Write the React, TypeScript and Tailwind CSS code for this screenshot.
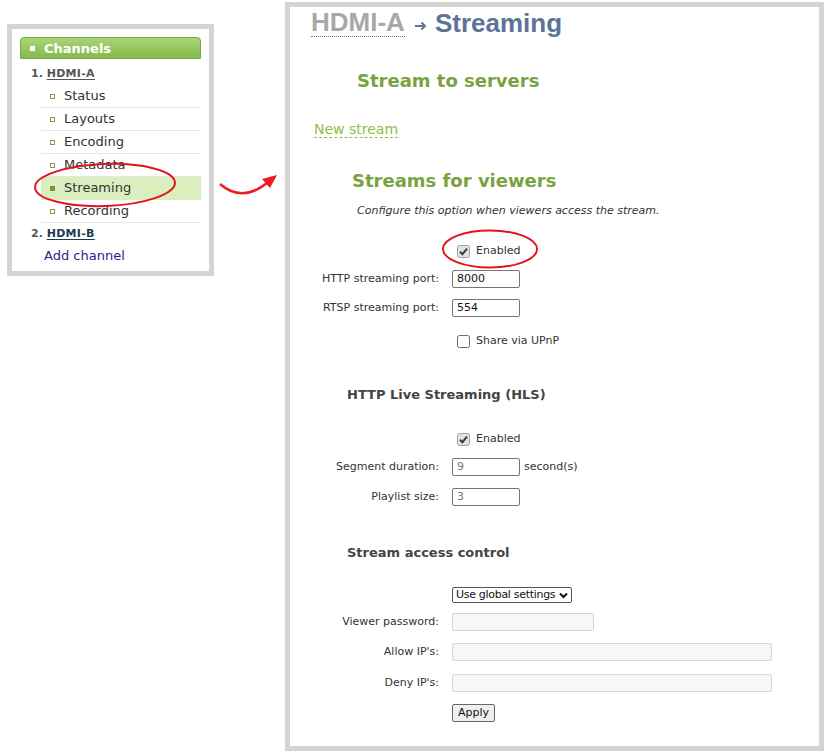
import React from "react";

function CheckOn() {
  return (
    <svg width="13" height="13" viewBox="0 0 13 13" className="block">
      <rect x="0.5" y="0.5" width="12" height="12" rx="2" fill="#e2e2e2" stroke="#a3a3a3" />
      <path d="M3 6.8 L5.4 9.2 L10 3.6" fill="none" stroke="#3a3a3a" strokeWidth="2" />
    </svg>
  );
}

function CheckOff() {
  return (
    <svg width="13" height="13" viewBox="0 0 13 13" className="block">
      <rect x="0.5" y="0.5" width="12" height="12" rx="2" fill="#ffffff" stroke="#6b6b6b" />
    </svg>
  );
}

function Row({ label, children, className = "" }: { label?: string; children: React.ReactNode; className?: string }) {
  return (
    <div className={"flex items-center h-[20px] " + className}>
      <div className="w-[149px] text-right text-[11px] text-[#333] whitespace-nowrap">{label}</div>
      <div className="ml-[13px] flex items-center">{children}</div>
    </div>
  );
}

function TextBox({ value, w, light, gray }: { value?: string; w: string; light?: boolean; gray?: boolean }) {
  return (
    <div
      className={
        "h-[18px] rounded-[2px] border text-[11px] pl-[4px] flex items-center " +
        w +
        (light ? " border-[#d6d6d6] bg-[#f7f7f7]" : " border-[#767676] bg-white") +
        (gray ? " text-[#777]" : " text-[#111]")
      }
    >
      {value}
    </div>
  );
}

function NavItem({ label, active }: { label: string; active?: boolean }) {
  return (
    <div
      className={
        "ml-[21px] h-[23px] border-b flex items-center " +
        (active ? "bg-[#daeebe] border-[#daeebe]" : "border-[#e6e6e6]")
      }
    >
      <span
        className={
          "ml-[9px] w-[5px] h-[5px] " + (active ? "bg-[#6f9c34]" : "border border-[#7f9d45] bg-white")
        }
      />
      <span className="ml-[9px] text-[13px] text-[#333]">{label}</span>
    </div>
  );
}

export default function App() {
  return (
    <div className="relative w-[827px] h-[753px] bg-white overflow-hidden flex items-start font-['DejaVu_Sans',sans-serif]">
      {/* Left sidebar */}
      <div className="ml-[7px] mt-[24px] w-[207px] h-[252px] shrink-0 border-[5px] border-[#d4d4d4] px-[8px] pt-[8px]">
        <div className="h-[22px] rounded-t-[4px] border border-[#76a845] bg-gradient-to-b from-[#a9d577] to-[#84b94b] flex items-center">
          <span className="ml-[9px] w-[5px] h-[5px] bg-white" />
          <span className="ml-[9px] text-white font-bold text-[13px] leading-none">Channels</span>
        </div>
        <div className="mt-[4px] h-[22px] pl-[11px] flex items-center text-[11px] font-bold text-[#555]">
          <span>1.&nbsp;</span>
          <span className="underline underline-offset-2 tracking-[0.3px]">HDMI-A</span>
        </div>
        <NavItem label="Status" />
        <NavItem label="Layouts" />
        <NavItem label="Encoding" />
        <NavItem label="Metadata" />
        <NavItem label="Streaming" active />
        <NavItem label="Recording" />
        <div className="h-[22px] pl-[11px] flex items-center text-[11px] font-bold text-[#555]">
          <span>2.&nbsp;</span>
          <span className="underline underline-offset-2 text-[#1d3a4c] tracking-[0.3px]">HDMI-B</span>
        </div>
        <div className="h-[22px] pl-[24px] flex items-center text-[13px] text-[#1f1f8f]">Add channel</div>
      </div>

      {/* Right main panel */}
      <div className="ml-[71px] mt-[2px] w-[539px] h-[749px] shrink-0 border-[5px] border-[#d4d4d4]">
        <div className="h-[32px] pl-[21px] flex items-center font-['Liberation_Sans',sans-serif] font-bold text-[26px] leading-none">
          <span className="text-[#a8a8a8] border-b border-dotted border-[#777] pb-[1px]">HDMI-A</span>
          <svg width="13" height="10" viewBox="0 0 13 10" className="ml-[9px] mt-[6px]">
            <path d="M1 5 H11 M7.5 1.5 L11 5 L7.5 8.5" fill="none" stroke="#5f7597" strokeWidth="2" />
          </svg>
          <span className="ml-[8px] text-[#5d7397]">Streaming</span>
        </div>

        <div className="mt-[30px] pl-[67px] h-[24px] leading-[24px] text-[18px] font-bold text-[#7aa23e]">
          Stream to servers
        </div>

        <div className="mt-[26px] pl-[24px] h-[20px] leading-[20px] text-[14px] text-[#8dc04a]">
          <span className="border-b border-dashed border-[#8dc04a]">New stream</span>
        </div>

        <div className="mt-[30px] pl-[62px] h-[24px] leading-[24px] text-[18px] font-bold text-[#7aa23e]">
          Streams for viewers
        </div>

        <div className="mt-[10px] pl-[67px] h-[16px] leading-[16px] text-[11px] italic text-[#333]">
          Configure this option when viewers access the stream.
        </div>

        <Row className="mt-[22px]">
          <span className="ml-[5px]">
            <CheckOn />
          </span>
          <span className="ml-[6px] text-[11px] text-[#333]">Enabled</span>
        </Row>
        <Row label="HTTP streaming port:" className="mt-[8px]">
          <TextBox value="8000" w="w-[68px]" />
        </Row>
        <Row label="RTSP streaming port:" className="mt-[9px]">
          <TextBox value="554" w="w-[68px]" />
        </Row>
        <Row className="mt-[13px]">
          <span className="ml-[5px]">
            <CheckOff />
          </span>
          <span className="ml-[6px] text-[11px] text-[#333]">Share via UPnP</span>
        </Row>

        <div className="mt-[35px] pl-[57px] h-[18px] leading-[18px] text-[13px] font-bold text-[#444]">
          HTTP Live Streaming (HLS)
        </div>

        <Row className="mt-[25px]">
          <span className="ml-[5px]">
            <CheckOn />
          </span>
          <span className="ml-[6px] text-[11px] text-[#333]">Enabled</span>
        </Row>
        <Row label="Segment duration:" className="mt-[8px]">
          <TextBox value="9" w="w-[68px]" gray />
          <span className="ml-[4px] text-[11px] text-[#333]">second(s)</span>
        </Row>
        <Row label="Playlist size:" className="mt-[10px]">
          <TextBox value="3" w="w-[68px]" gray />
        </Row>

        <div className="mt-[37px] pl-[57px] h-[18px] leading-[18px] text-[13px] font-bold text-[#444]">
          Stream access control
        </div>

        <Row className="mt-[23px]">
          <div className="h-[16px] rounded-[2px] border border-[#555] bg-white flex items-center pl-[3px] pr-[3px] text-[11px] tracking-[-0.3px] text-[#111] whitespace-nowrap">
            <span>Use global settings</span>
            <svg width="9" height="7" viewBox="0 0 9 7" className="ml-[4px]">
              <path d="M1 1.5 L4.5 5 L8 1.5" fill="none" stroke="#111" strokeWidth="2" />
            </svg>
          </div>
        </Row>
        <Row label="Viewer password:" className="mt-[7px]">
          <TextBox w="w-[142px]" light />
        </Row>
        <Row label="Allow IP's:" className="mt-[10px]">
          <TextBox w="w-[320px]" light />
        </Row>
        <Row label="Deny IP's:" className="mt-[11px]">
          <TextBox w="w-[320px]" light />
        </Row>
        <Row className="mt-[10px]">
          <div className="h-[18px] w-[43px] rounded-[2px] border border-[#666] bg-[#efefef] flex items-center justify-center text-[11px] text-[#111]">
            Apply
          </div>
        </Row>
      </div>

      {/* Annotations */}
      <svg className="absolute left-0 top-0 pointer-events-none" width="827" height="753" viewBox="0 0 827 753">
        <ellipse cx="105" cy="185" rx="70" ry="21" fill="none" stroke="#e3151c" strokeWidth="2" transform="rotate(-2 105 185)" />
        <ellipse cx="490" cy="249" rx="47" ry="18.5" fill="none" stroke="#e3151c" strokeWidth="2" />
        <path d="M220 184 Q 242 203 267 183" fill="none" stroke="#ee1c24" strokeWidth="2.6" />
        <polygon points="277,175 262,179 270,188" fill="#ee1c24" />
      </svg>
    </div>
  );
}
